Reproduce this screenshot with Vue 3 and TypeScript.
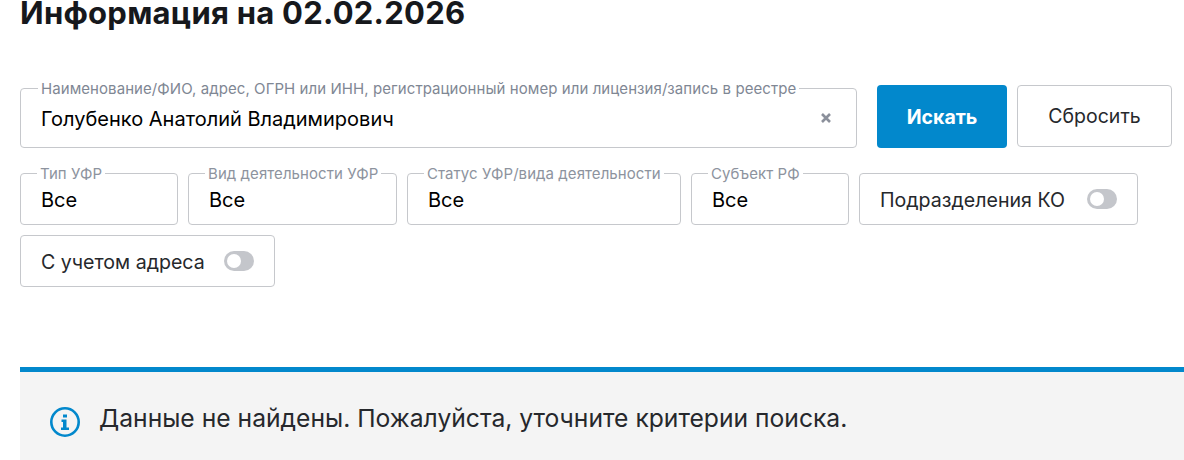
<script setup lang="ts">
const filters: { label: string; width: number }[] = [
  { label: 'Тип УФР', width: 158 },
  { label: 'Вид деятельности УФР', width: 209 },
  { label: 'Статус УФР/вида деятельности', width: 274 },
  { label: 'Субъект РФ', width: 158 },
];

const toggles: { label: string; width: number }[] = [
  { label: 'Подразделения КО', width: 279 },
  { label: 'С учетом адреса', width: 255 },
];
</script>

<template>
  <div class="page">
    <h1 class="title">Информация на 02.02.2026</h1>

    <div class="search-row">
      <div class="field field-main">
        <span class="field-label">Наименование/ФИО, адрес, ОГРН или ИНН, регистрационный номер или лицензия/запись в реестре</span>
        <span class="field-value">Голубенко Анатолий Владимирович</span>
        <svg class="clear" width="10" height="10" viewBox="0 0 10 10">
          <path d="M1 1l8 8M9 1l-8 8" stroke="#8b909b" stroke-width="2.6" fill="none" />
        </svg>
      </div>
      <button class="btn btn-primary">Искать</button>
      <button class="btn btn-reset">Сбросить</button>
    </div>

    <div class="filters">
      <div v-for="f in filters" :key="f.label" class="field field-small" :style="{ width: f.width + 'px' }">
        <span class="field-label">{{ f.label }}</span>
        <span class="field-value">Все</span>
      </div>
      <div v-for="t in toggles" :key="t.label" class="toggle-box" :style="{ width: t.width + 'px' }">
        <span class="toggle-text">{{ t.label }}</span>
        <span class="toggle"></span>
      </div>
    </div>

    <div class="alert">
      <svg class="alert-icon" width="30" height="30" viewBox="0 0 30 30" fill="none">
        <circle cx="15" cy="15" r="13.7" stroke="#0288cc" stroke-width="2.6" />
        <rect x="13" y="7.5" width="4" height="3" fill="#0288cc" />
        <path d="M11.5 12.500h5v8h2.500v2.500h-8v-2.500H13v-5.500h-1.500z" fill="#0288cc" />
      </svg>
      <span>Данные не найдены. Пожалуйста, уточните критерии поиска.</span>
    </div>
  </div>
</template>

<style>
body {
  margin: 0;
  background: #fff;
}
</style>

<style scoped>
.page {
  height: 460px;
  overflow: hidden;
  padding-left: 20px;
  box-sizing: border-box;
  font-family: Inter, "Noto Sans", sans-serif;
  color: #26282c;
}
.title {
  margin: -7px 0 0;
  height: 92px;
  font-size: 31px;
  line-height: 40px;
  font-weight: 700;
  color: #16181c;
  letter-spacing: 0.25px;
}
.search-row {
  display: flex;
  align-items: flex-start;
  height: 80px;
}
.field {
  position: relative;
  box-sizing: border-box;
  border: 1px solid #c6c8cc;
  border-radius: 4px;
  background: #fff;
  display: flex;
  align-items: center;
  padding-left: 20px;
  color: #000;
  font-size: 20px;
}
.field-main {
  width: 837px;
  height: 60px;
  margin-top: 3px;
  margin-right: 20px;
  padding-top: 2px;
}
.field-small {
  height: 52px;
  padding-top: 2px;
}
.field-label {
  position: absolute;
  top: -9px;
  left: 17px;
  padding: 0 3px;
  background: #fff;
  font-size: 15px;
  line-height: 18px;
  letter-spacing: 0.07px;
  color: #7f8794;
  white-space: nowrap;
}
.field-small .field-label {
  left: 16px;
  color: #8d939e;
}
.clear {
  position: absolute;
  right: 25px;
  top: 24px;
}
.btn {
  box-sizing: border-box;
  border-radius: 4px;
  font-family: inherit;
  font-size: 19.5px;
  cursor: pointer;
}
.btn-primary {
  width: 130px;
  height: 63px;
  margin-right: 10px;
  border: none;
  background: #0288cc;
  color: #fff;
  font-weight: 700;
}
.btn-reset {
  width: 155px;
  height: 62px;
  border: 1px solid #c6c8cc;
  background: #fff;
  color: #26282c;
}
.filters {
  display: flex;
  flex-wrap: wrap;
  gap: 10px;
  width: 1150px;
  margin-top: 8px;
}
.toggle-box {
  box-sizing: border-box;
  height: 52px;
  display: flex;
  align-items: center;
  justify-content: space-between;
  padding: 0 20px;
  border: 1px solid #c6c8cc;
  border-radius: 4px;
  font-size: 19.6px;
}
.toggle-text {
  padding-top: 1px;
}
.toggle {
  position: relative;
  width: 30px;
  height: 20px;
  border-radius: 10px;
  background: #c4c6cb;
}
.toggle::after {
  content: "";
  position: absolute;
  left: 3px;
  top: 3px;
  width: 14px;
  height: 14px;
  border-radius: 50%;
  background: #fff;
}
.alert {
  display: flex;
  align-items: center;
  gap: 19px;
  margin-top: 80px;
  height: 93px;
  box-sizing: border-box;
  border-top: 5px solid #0288cc;
  background: #f4f4f4;
  padding: 4px 0 0 30px;
  font-size: 24.66px;
}
.alert-icon {
  margin-top: 8px;
}
</style>
